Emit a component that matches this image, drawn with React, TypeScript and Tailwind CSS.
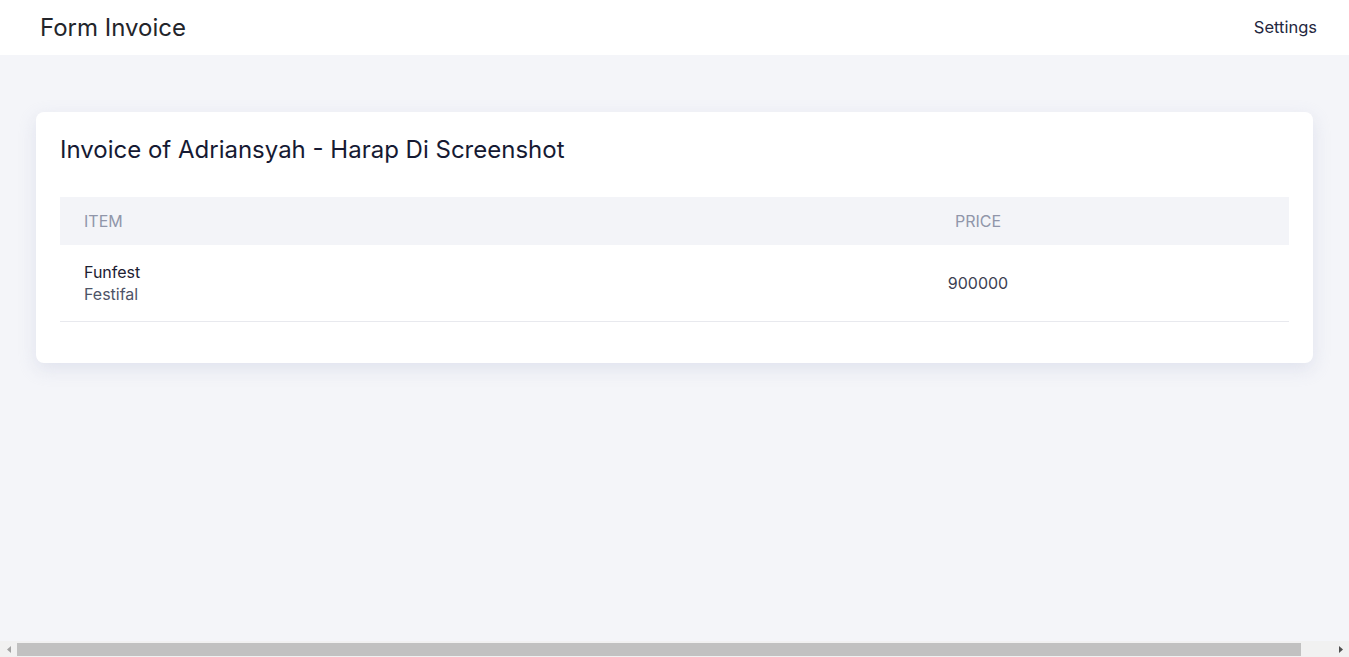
import React from 'react';

type Item = { name: string; category: string; price: number };

const items: Item[] = [{ name: 'Funfest', category: 'Festifal', price: 900000 }];

const App: React.FC = () => {
  return (
    <div className="h-screen flex flex-col bg-[#f4f5f9] font-['Inter',sans-serif] overflow-hidden">
      {/* Navbar */}
      <header className="h-[55px] bg-white flex items-center justify-between pl-10 pr-8 shrink-0">
        <h1 className="text-2xl text-[#23252b]">Form Invoice</h1>
        <span className="text-[16.5px] leading-6 -mt-0.5 text-[#242740]">Settings</span>
      </header>

      {/* Isi halaman */}
      <main className="flex-1 px-9 pt-[57px]">
        <div className="bg-white rounded-lg shadow-[0_6px_18px_rgba(200,205,225,0.45)] px-6 pt-6 pb-[41px]">
          <h2 className="text-2xl leading-7 text-[#161a33]">Invoice of Adriansyah - Harap Di Screenshot</h2>

          <div className="mt-[33px]">
            <div className="grid grid-cols-[607px_1fr] bg-[#f3f4f8] h-12 items-center text-base uppercase text-[#9096aa]">
              <div className="px-6">Item</div>
              <div className="text-center">Price</div>
            </div>
            {items.map((item) => (
              <div key={item.name} className="grid grid-cols-[607px_1fr] items-center border-b border-[#e8e9ee] py-4">
                <div className="px-6 text-base leading-[22px]">
                  <div className="text-[#1d2033]">{item.name}</div>
                  <div className="text-[#4e5467]">{item.category}</div>
                </div>
                <div className="text-center text-base text-[#3c4152]">{item.price}</div>
              </div>
            ))}
          </div>
        </div>
      </main>

      {/* Scrollbar horizontal */}
      <div className="h-4 bg-[#f1f1f1] flex items-center shrink-0">
        <div className="w-[17px] flex justify-center">
          <svg width="4" height="7" viewBox="0 0 4 7"><path d="M4 0 L0 3.5 L4 7 Z" fill="#a3a3a3" /></svg>
        </div>
        <div className="w-[1284px] h-[13px] bg-[#c1c1c1]" />
        <div className="flex-1 flex justify-end pr-[6px]">
          <svg width="4" height="7" viewBox="0 0 4 7"><path d="M0 0 L4 3.5 L0 7 Z" fill="#505050" /></svg>
        </div>
      </div>
    </div>
  );
};

export default App;
